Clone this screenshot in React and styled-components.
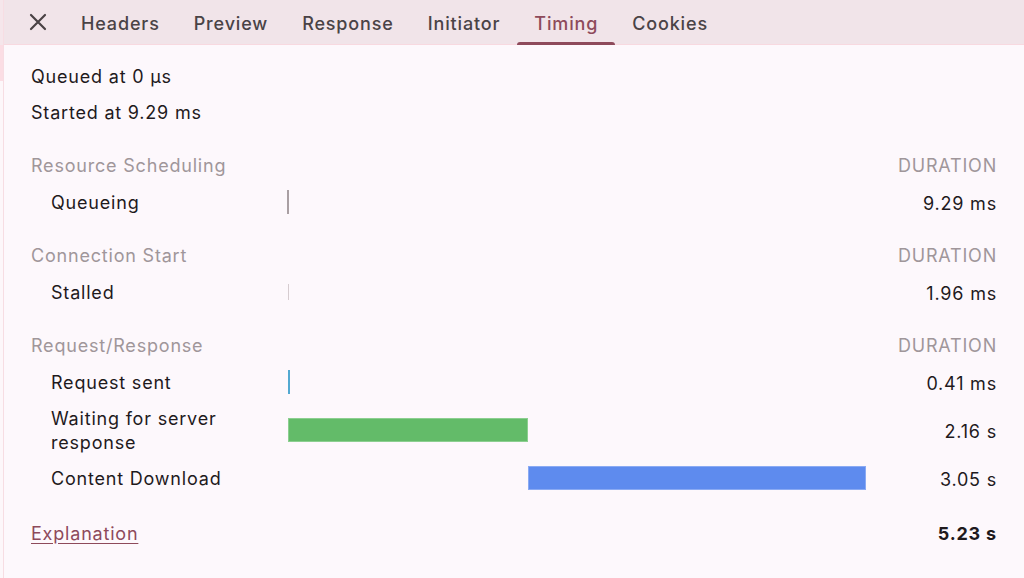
import React from "react";
import styled, { createGlobalStyle } from "styled-components";

const Global = createGlobalStyle`
  html, body { margin: 0; padding: 0; background: #fdf8fc; }
  body { font-family: Inter, "Noto Sans", sans-serif; -webkit-font-smoothing: antialiased; letter-spacing: 0.8px; }
`;

const Shell = styled.div`
  display: flex;
  width: 1024px;
  height: 578px;
  overflow: hidden;
  background: #fdf8fc;
`;

const Edge = styled.div`
  width: 3px;
  flex: none;
  display: flex;
  flex-direction: column;
  border-right: 1px solid #f7dde3;
`;

const EdgePart = styled.div`
  height: ${(p) => p.$h || "auto"};
  flex: ${(p) => (p.$grow ? 1 : "none")};
  background: ${(p) => p.$bg};
`;

const Panel = styled.div`
  flex: 1;
  display: flex;
  flex-direction: column;
  min-width: 0;
`;

const TabBar = styled.div`
  height: 44px;
  flex: none;
  display: flex;
  align-items: stretch;
  background: #f1e4e9;
  border-bottom: 1px solid #f8d9e0;
  padding-left: 22px;
`;

const CloseBtn = styled.button`
  width: 24px;
  border: 0;
  background: none;
  padding: 0;
  margin-right: 14px;
  display: flex;
  align-items: center;
  justify-content: center;
  color: #4a4245;
`;

const Tab = styled.div`
  position: relative;
  display: flex;
  align-items: center;
  padding: 2px 17px 0;
  font-size: 18px;
  font-weight: 500;
  letter-spacing: 0.85px;
  color: ${(p) => (p.$active ? "#8e4a5b" : "#4a4346")};
  &::after {
    content: "";
    display: ${(p) => (p.$active ? "block" : "none")};
    position: absolute;
    left: 0;
    right: 0;
    bottom: -1px;
    height: 3px;
    border-radius: 3px 3px 0 0;
    background: #8e4a5b;
  }
`;

const Body = styled.div`
  flex: 1;
  padding: 14px 27px 0 27px;
  color: #1f1a1d;
  font-size: 18px;
`;

const InfoLine = styled.div`
  height: 36px;
  line-height: 36px;
`;

const Grid = styled.div`
  display: grid;
  grid-template-columns: 257px 578px 1fr;
  margin-top: 16px;
`;

const SectionTitle = styled.div`
  grid-column: 1 / 3;
  height: 36px;
  display: flex;
  align-items: center;
  color: #a0969a;
  margin-top: ${(p) => (p.$first ? "0" : "16px")};
`;

const SectionDur = styled.div`
  height: 36px;
  display: flex;
  align-items: center;
  justify-content: flex-end;
  color: #a0969a;
  margin-top: ${(p) => (p.$first ? "0" : "16px")};
`;

const Label = styled.div`
  min-height: 38px;
  padding: 6px 0 4px 20px;
  box-sizing: border-box;
  display: flex;
  align-items: center;
  line-height: 24px;
`;

const BarCell = styled.div`
  position: relative;
  display: flex;
  align-items: center;
`;

const Bar = styled.div`
  position: absolute;
  top: 50%;
  height: ${(p) => p.$height || 24}px;
  transform: translateY(-50%);
  background: ${(p) => p.$color};
  box-sizing: border-box;
  border: ${(p) => (p.$border ? `1px solid ${p.$border}` : "0")};
`;

const Dur = styled.div`
  display: flex;
  align-items: center;
  justify-content: flex-end;
  padding-top: 2px;
  font-weight: ${(p) => (p.$bold ? 700 : 400)};
`;

const Footer = styled.div`
  grid-column: 1 / 3;
  height: 36px;
  margin-top: 17px;
  padding-top: 2px;
  box-sizing: border-box;
  display: flex;
  align-items: center;
`;

const FooterTotal = styled(Dur)`
  height: 36px;
  box-sizing: border-box;
  margin-top: 17px;
`;

const Link = styled.a`
  color: #8e4a5b;
  text-decoration: underline;
  text-underline-offset: 3px;
  cursor: pointer;
`;

const sections = [
  {
    title: "Resource Scheduling",
    rows: [{ label: "Queueing", dur: "9.29 ms", bar: { start: -1, w: 2, color: "#a99fa3" } }],
  },
  {
    title: "Connection Start",
    rows: [{ label: "Stalled", dur: "1.96 ms", bar: { start: 0, w: 1, color: "#d6ccd0", h: 16 } }],
  },
  {
    title: "Request/Response",
    rows: [
      { label: "Request sent", dur: "0.41 ms", bar: { start: 0, w: 2, color: "#53a9d1" } },
      {
        label: "Waiting for server response",
        dur: "2.16 s",
        bar: { start: 0, w: 240, color: "#63bb69", border: "#8ccf90" },
      },
      {
        label: "Content Download",
        dur: "3.05 s",
        bar: { start: 240, w: 338, color: "#5e8bee", border: "#8aaaf3" },
      },
    ],
  },
];

const Close = () => (
  <svg width="18" height="18" viewBox="0 0 18 18" fill="none">
    <path d="M2 2L16 16M16 2L2 16" stroke="currentColor" strokeWidth="2.2" strokeLinecap="round" />
  </svg>
);

export default function App() {
  const tabs = ["Headers", "Preview", "Response", "Initiator", "Timing", "Cookies"];
  return (
    <>
      <Global />
      <Shell>
        <Edge>
          <EdgePart $h="45px" $bg="#f5e6eb" />
          <EdgePart $h="36px" $bg="#fbdde4" />
          <EdgePart $grow $bg="#fdf7fa" />
        </Edge>
        <Panel>
          <TabBar>
            <CloseBtn aria-label="Close">
              <Close />
            </CloseBtn>
            {tabs.map((t) => (
              <Tab key={t} $active={t === "Timing"}>
                {t}
              </Tab>
            ))}
          </TabBar>
          <Body>
            <InfoLine>Queued at 0 µs</InfoLine>
            <InfoLine>Started at 9.29 ms</InfoLine>
            <Grid>
              {sections.map((s, si) => (
                <React.Fragment key={s.title}>
                  <SectionTitle $first={si === 0}>{s.title}</SectionTitle>
                  <SectionDur $first={si === 0}>DURATION</SectionDur>
                  {s.rows.map((r) => (
                    <React.Fragment key={r.label}>
                      <Label>{r.label}</Label>
                      <BarCell>
                        <Bar
                          $color={r.bar.color}
                          $border={r.bar.border}
                          $height={r.bar.h}
                          style={{ left: r.bar.start, width: r.bar.w }}
                        />
                      </BarCell>
                      <Dur>{r.dur}</Dur>
                    </React.Fragment>
                  ))}
                </React.Fragment>
              ))}
              <Footer>
                <Link>Explanation</Link>
              </Footer>
              <FooterTotal $bold>5.23 s</FooterTotal>
            </Grid>
          </Body>
        </Panel>
      </Shell>
    </>
  );
}
